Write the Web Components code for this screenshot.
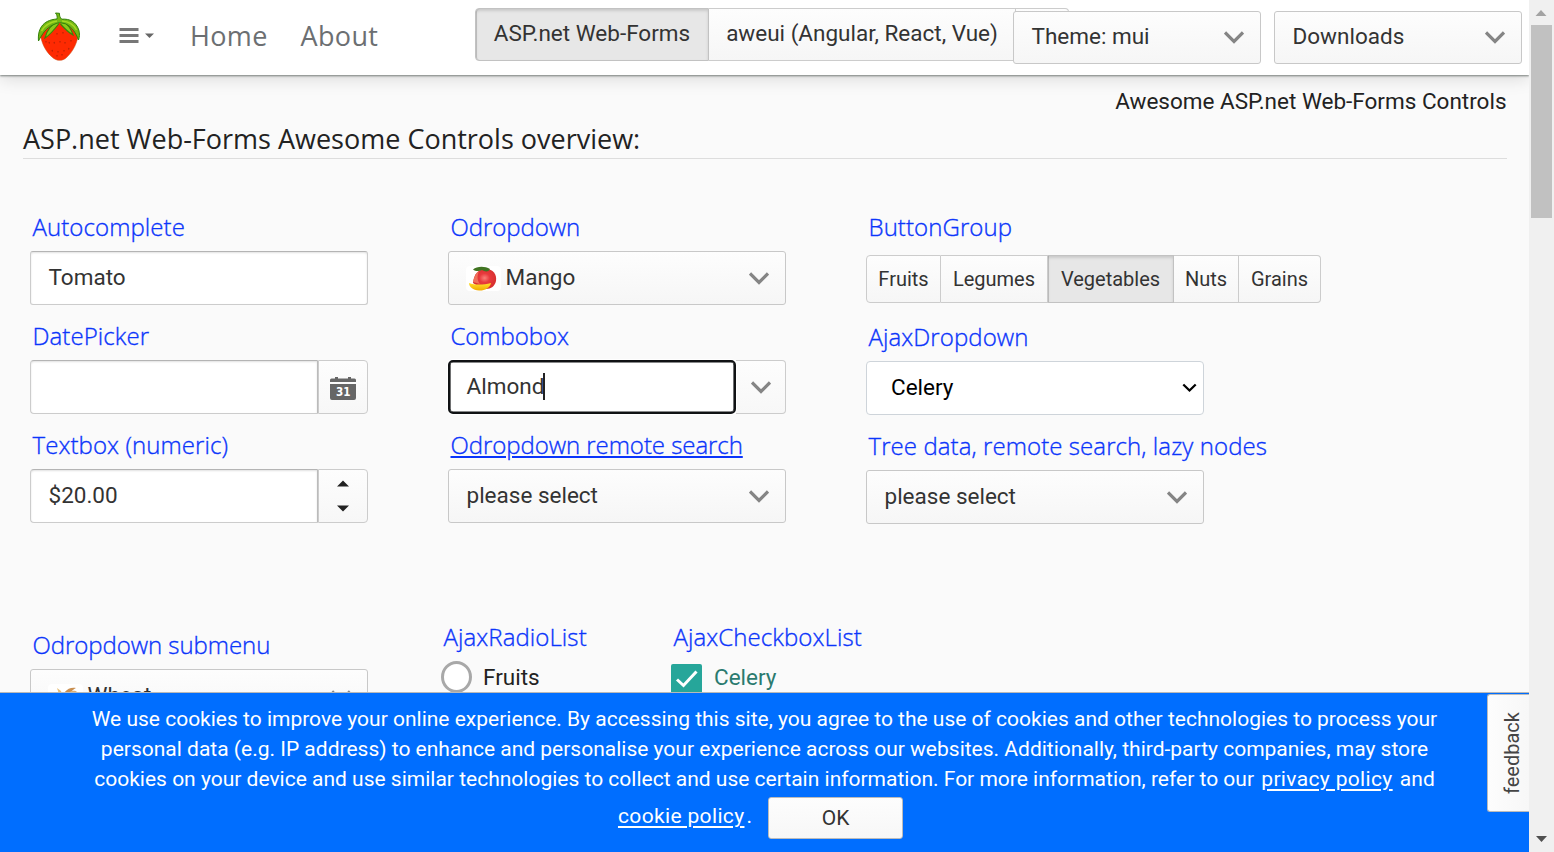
<!DOCTYPE html>
<html lang="en">
<head>
<meta charset="utf-8">
<title>ASP.net Web-Forms Awesome Controls overview</title>
<style>
html,body{margin:0;height:100%;overflow:hidden;background:#fafafa}
body{font-family:Roboto,"Liberation Sans",sans-serif;font-size:22.5px;color:#222}
</style>
</head>
<body>
<awe-page></awe-page>
<script>
const define = (name, html) => customElements.define(name, class extends HTMLElement {
  constructor() {
    super();
    const t = document.createElement('template');
    t.innerHTML = html;
    this.attachShadow({ mode: 'open' }).append(t.content.cloneNode(true));
  }
});

define('awe-chevron', `
<style>:host{display:block;width:20px;height:13px;flex:none}svg{display:block}</style>
<svg width="20" height="13" viewBox="0 0 20 13"><path d="M1 1.5 L10 10.4 L19 1.5" fill="none" stroke="#858585" stroke-width="3.2"/></svg>`);

define('awe-strawberry', `
<style>:host{display:block;width:44px;height:50px}svg{display:block}</style>
<svg width="44" height="50" viewBox="0 0 44 50">
<path d="M3 20 C4 31 9 40 15 45 C19 49 25 49.500 29 46 C36 40 41 30 41.500 20 C35 8 10 8 3 20Z" fill="#fe2a02" stroke="#c8480f" stroke-width=".5"/>
<path d="M21 9 C15 12 10 18 8 26 C13 23 17 18 22 11.500 M25 9 C31 12 34 16 36 23 C31 20 27 16 23.500 12" fill="#8cc91a" stroke="#3c8508" stroke-width="1.200"/>
<path d="M18.500 1 L22.500 1.300 C22.300 4 23 5 24.600 7.200 C33 6.500 39 10 41.800 18 C42.800 22 42.600 25 41.500 28 C39 21 35 15 28.500 11.800 L22.500 10.500 C13 13 8 18 5 23 C3.500 25 2.500 27 1.500 29 C.5 18 5 8 20 7 C20.500 4.500 20 3 18.500 1Z" fill="#75b714" stroke="#32820a" stroke-width="1"/>
<path d="M20 9 C13 10 8 13 4.500 19 M25 9 C32 9.500 37 13 39.500 18" fill="none" stroke="#a5d922" stroke-width="1.600"/>
<path d="M26 20v1.500 M20 21v1.500 M12 30l.5 1.500 M17 30l.5 1.500 M23 29v1.500 M28 30v1.500 M34 28v1.500 M9 29v1.500 M15 38l.5 1.500 M21 39v1.500 M27 38v1.500 M32 36l-.5 1.500 M20 43v1.500 M25 42v1.500" stroke="#b32106" stroke-width="1.100"/>
</svg>`);

define('awe-menu-icon', `
<style>:host{display:block;width:36px;height:17px}svg{display:block}</style>
<svg width="36" height="17" viewBox="0 0 36 17"><path d="M.5 2.500h19M.5 8.500h19M.5 14.500h19" stroke="#777" stroke-width="2.900"/><path d="M26 6.500h9L30.500 11z" fill="#666"/></svg>`);

define('awe-calendar', `
<style>:host{display:block;width:26px;height:24px;margin-top:3px}svg{display:block}text{font:bold 13px "DejaVu Sans",sans-serif}</style>
<svg width="26" height="24" viewBox="0 0 26 24"><path d="M0 5V3q0-1.500 1.500-1.500H5V0h3v1.500h10V0h3v1.500h3.500q1.500 0 1.500 1.500v2zM0 7h26v14q0 2-2 2H2q-2 0-2-2z" fill="#666"/><text x="6" y="19.300" fill="#fff" textLength="14.500" lengthAdjust="spacingAndGlyphs">31</text></svg>`);

define('awe-mango', `
<style>:host{display:block;width:35px;height:25px;border-radius:4px;background:#fff}svg{display:block}</style>
<svg width="35" height="25" viewBox="0 0 35 25"><defs><radialGradient id="m" cx=".5" cy=".45"><stop offset="0" stop-color="#fb8078"/><stop offset=".45" stop-color="#e83a3e"/><stop offset="1" stop-color="#d8302f"/></radialGradient><linearGradient id="y" x2="0" y2="1"><stop stop-color="#ffe22c"/><stop offset="1" stop-color="#f2a900"/></linearGradient></defs>
<path d="M7 17C8 8 12 3 20 3C27 3 31 8 30 15C29 20 25 23 20 23C15 22 11 20 7 17Z" fill="url(#m)"/><path d="M7 16C8 11 10 7 13 5C11 10 11 14 14 18Z" fill="#f0705a"/>
<path d="M3 17C9 19 17 19 25 17C24 22 18 25 13 24.500C7 24 3 21 3 17Z" fill="url(#y)"/>
<path d="M7 3.500C11 0 19 0 24 3C23 6 19 6 16 4C13 6 9 5 7 3.500Z" fill="#407421"/></svg>`);

define('awe-wheat', `
<style>:host{display:block;width:35px;height:25px;border-radius:4px;background:#fff}svg{display:block}</style>
<svg width="35" height="25" viewBox="0 0 35 25"><path d="M9 4l4 3 2 6-4-3zM7 10l5 2 3 5-5-1z" fill="#e5bd76"/><path d="M16 9C19 5 23 3 28 4C24 6 22 9 17 15Z" fill="#c98f50"/><path d="M22 8C25 6 28 7 29 8C25 9 22 13 17 18Z" fill="#dcae73"/></svg>`);

define('awe-brand-link', `
<style>:host{display:block;font:27px/37px "Open Sans",sans-serif;color:#6c6f72;letter-spacing:.35px;white-space:nowrap}</style><slot></slot>`);

define('awe-label', `
<style>:host{display:block;height:40px;padding-left:2.500px;font:300 24px/32px "Open Sans",sans-serif;color:#0b35fb;-webkit-text-stroke:.35px #0b35fb;letter-spacing:var(--ls,.08px);white-space:nowrap;box-sizing:border-box}
:host([under]) span{text-decoration:underline;text-decoration-thickness:2px;text-underline-offset:2px}</style><span><slot></slot></span>`);

define('awe-dropdown', `
<style>:host{display:flex;box-sizing:border-box;width:var(--w,338px);height:54px;align-items:center;border:1px solid #c8c8c8;border-radius:3px;background:linear-gradient(#fdfdfd,#f6f6f6);padding:0 16px 0 17.500px;color:#333;line-height:30px;white-space:nowrap}
:host([compact]){height:53px}
:host([compact]) .t{margin-top:-4px}
.t{flex:1;display:flex;align-items:center;margin-top:-2px}
::slotted(awe-mango),::slotted(awe-wheat){margin:3px 5px 0 -1px}</style>
<div class="t"><slot name="icon"></slot><slot></slot></div><awe-chevron></awe-chevron>`);

define('awe-textbox', `
<style>:host{display:flex;width:338px;height:54px}
.in{flex:1;box-sizing:border-box;border:1px solid #ccc;border-top-color:#b4b4b4;border-radius:3px;background:#fff;box-shadow:inset 0 1px 2px rgba(0,0,0,.12);padding-left:17.500px;line-height:50px;color:#333}
.btn{display:none;box-sizing:border-box;width:50px;border:1px solid #ccc;border-left-width:1px;border-radius:0 4px 4px 0;background:linear-gradient(#fdfdfd,#f7f7f7);align-items:center;justify-content:center}
:host([addon]) .btn{display:flex}
:host([addon]) .in{border-radius:4px 0 0 4px;border-right-color:#bbb}
:host([focused]) .in{border:2px solid #101214;border-radius:5px;box-shadow:0 0 0 1px #fff,inset 0 0 0 .6px #101214;padding-left:16.500px;line-height:48px;z-index:1}
:host([focused]) .btn{border-left:0}</style>
<div class="in"><slot></slot></div><div class="btn"><slot name="addon"></slot></div>`);

define('awe-caret', `<style>:host{display:inline-block;width:2px;height:27px;background:#222;vertical-align:-6px;margin-left:-1px}</style>`);

define('awe-spinner', `<style>:host{display:block}svg{display:block}</style>
<svg width="12" height="32" viewBox="0 0 12 32"><path d="M0 6.500L6 .5L12 6.500zM0 25.500h12L6 31.500z" fill="#222"/></svg>`);

define('awe-native-select', `
<style>:host{display:flex;align-items:center;box-sizing:border-box;width:338px;height:54px;border:1px solid #ced4da;border-radius:4px;background:#fff;color:#000;padding:0 6px 0 24px}
span{flex:1;margin-top:-2px}svg{display:block}</style>
<span><slot></slot></span><svg width="15" height="10" viewBox="0 0 15 10"><path d="M1.300 1.500L7.500 7.500L13.700 1.500" fill="none" stroke="#000" stroke-width="2.300"/></svg>`);

define('awe-group-button', `
<style>:host{display:block;flex:none;box-sizing:border-box;width:var(--w);height:48px;border:1px solid #ccc;border-left-width:0;background:linear-gradient(#fdfdfd,#f6f6f6);font-size:20px;line-height:46px;color:#333;text-align:center;white-space:nowrap}
:host([first]){border-left-width:1px;border-radius:4px 0 0 4px}:host([last]){border-radius:0 4px 4px 0}
:host([big]){height:53px;font-size:22.5px;line-height:49px}
:host([active]){background:#e7e7e7;border-color:#c2c2c2;box-shadow:inset 0 2px 3px rgba(0,0,0,.13),inset 1px 0 0 #c4c4c4}</style><slot></slot>`);

define('awe-group', `<style>:host{display:flex}</style><slot></slot>`);

define('awe-header', `
<style>:host{display:flex;position:relative;z-index:2;height:75px;box-sizing:border-box;background:#fff;box-shadow:0 1px 2px rgba(80,90,85,.75),0 4px 16px rgba(0,0,0,.13);clip-path:inset(0 0 -30px 0)}
.left{display:flex;width:475px;box-sizing:border-box;padding-left:36.500px}
awe-strawberry{margin-top:11.500px}awe-menu-icon{margin:27px 0 0 38.500px}
.home{margin:17px 0 0 35px;width:110.500px}.about{margin-top:17px}
.switch{width:538px;padding-top:8px}
.right{display:flex;gap:13px;padding-top:11px}
awe-dropdown{--w:248px}</style>
<div class="left"><awe-strawberry></awe-strawberry><awe-menu-icon></awe-menu-icon><awe-brand-link class="home">Home</awe-brand-link><awe-brand-link class="about">About</awe-brand-link></div>
<awe-group class="switch"><awe-group-button big first active style="--w:234px">ASP.net Web-Forms</awe-group-button><awe-group-button big style="--w:307px">aweui (Angular, React, Vue)</awe-group-button><awe-group-button big last style="--w:53px"></awe-group-button></awe-group>
<div class="right"><awe-dropdown compact>Theme: mui</awe-dropdown><awe-dropdown compact>Downloads</awe-dropdown></div>`);

define('awe-radio', `
<style>:host{display:flex;align-items:center;gap:11px;color:#222}i{box-sizing:border-box;width:31px;height:32px;border:3px solid #a8a8a8;border-radius:50%;background:#fff}</style><i></i><span><slot></slot></span>`);

define('awe-checkbox', `
<style>:host{display:flex;align-items:center;gap:12px;color:#2b7a6f;height:32px}svg{display:block;margin-top:4px}</style>
<svg width="31" height="31" viewBox="0 0 31 31"><rect width="31" height="31" rx="2" fill="#26a69a"/><path d="M6 15.500L12.500 21.500L25.500 7.500" fill="none" stroke="#fff" stroke-width="3"/></svg><span><slot></slot></span>`);

define('awe-overview', `
<style>:host{display:block;height:617px;overflow:hidden;padding-left:30px}
.crumb{height:53px;box-sizing:border-box;padding:11px 22.500px 0 0;text-align:right;line-height:30px}
.crumb,.title{margin-left:-7px}
.title{margin-right:22px;height:31px;border-bottom:1px solid #ddd;font:27px/37px "Open Sans",sans-serif;margin-top:-1px;display:flex;align-items:flex-end;white-space:nowrap}
.title span{line-height:38px}
.cols{display:grid;grid-template-columns:338px 338px 455px;column-gap:80px;margin-top:52px}
.col{display:flex;flex-direction:column;gap:15px}
.third{gap:0}.third div+div{margin-top:18px}.third div+div+div{margin-top:15px}
.third div:first-child awe-label{height:44px}
.lower{display:flex;margin-top:97px}
.lower .sub{width:411px;padding-top:8px}.lower .radio{width:230px}
.tight{--ls:-.06px}</style>
<div class="crumb">Awesome ASP.net Web-Forms Controls</div>
<div class="title"><span>ASP.net Web-Forms Awesome Controls overview:</span></div>
<div class="cols">
<div class="col">
<div><awe-label>Autocomplete</awe-label><awe-textbox>Tomato</awe-textbox></div>
<div><awe-label>DatePicker</awe-label><awe-textbox addon><awe-calendar slot="addon"></awe-calendar></awe-textbox></div>
<div><awe-label>Textbox (numeric)</awe-label><awe-textbox addon>$20.00<awe-spinner slot="addon"></awe-spinner></awe-textbox></div>
</div>
<div class="col">
<div><awe-label class="tight">Odropdown</awe-label><awe-dropdown><awe-mango slot="icon"></awe-mango>Mango</awe-dropdown></div>
<div><awe-label class="tight">Combobox</awe-label><awe-textbox addon focused>Almond<awe-caret></awe-caret><awe-chevron slot="addon"></awe-chevron></awe-textbox></div>
<div><awe-label class="tight" under>Odropdown remote search</awe-label><awe-dropdown>please select</awe-dropdown></div>
</div>
<div class="col third">
<div><awe-label>ButtonGroup</awe-label><awe-group><awe-group-button first style="--w:75px">Fruits</awe-group-button><awe-group-button style="--w:107px">Legumes</awe-group-button><awe-group-button active style="--w:126px">Vegetables</awe-group-button><awe-group-button style="--w:65px">Nuts</awe-group-button><awe-group-button last style="--w:82px">Grains</awe-group-button></awe-group></div>
<div><awe-label>AjaxDropdown</awe-label><awe-native-select>Celery</awe-native-select></div>
<div><awe-label>Tree data, remote search, lazy nodes</awe-label><awe-dropdown>please select</awe-dropdown></div>
</div>
</div>
<div class="lower">
<div class="sub"><awe-label class="tight">Odropdown submenu</awe-label><awe-dropdown><awe-wheat slot="icon"></awe-wheat>Wheat</awe-dropdown></div>
<div class="radio"><awe-label>AjaxRadioList</awe-label><awe-radio>Fruits</awe-radio></div>
<div><awe-label>AjaxCheckboxList</awe-label><awe-checkbox>Celery</awe-checkbox></div>
</div>`);

define('awe-cookie-bar', `
<style>:host{display:block;position:relative;height:160px;box-sizing:border-box;background:#006eff;border-top:1px solid #b9b9b9;color:#fff;font-size:21px;line-height:30px;padding-top:11px;text-align:center}
p{margin:0;white-space:nowrap}.last{display:flex;justify-content:center;align-items:center;margin-top:3px;height:42px;padding-right:10px}
u{text-decoration-thickness:2px;text-underline-offset:3px;margin:0 2px;letter-spacing:.35px}
button{box-sizing:border-box;width:135px;height:42px;margin:0 0 0 16px;border:1px solid #bbb;border-radius:3px;background:linear-gradient(#fdfdfd,#f7f7f7);font:21px Roboto,sans-serif;color:#333;padding:0}
.fb{position:absolute;right:0;top:1px;box-sizing:border-box;width:42px;height:118px;background:linear-gradient(90deg,#f7f7f7,#fdfdfd);color:#444;font-size:20px;line-height:38px;writing-mode:vertical-rl;transform:rotate(180deg);border:1px solid #bbb;border-left:0;border-radius:0 3px 3px 0;padding-right:5px}</style>
<p>We use cookies to improve your online experience. By accessing this site, you agree to the use of cookies and other technologies to process your</p>
<p>personal data (e.g. IP address) to enhance and personalise your experience across our websites. Additionally, third-party companies, may store</p>
<p>cookies on your device and use similar technologies to collect and use certain information. For more information, refer to our <u>privacy policy</u> and</p>
<div class="last"><span style="margin-top:-4px"><u>cookie policy</u>.</span><button>OK</button></div>
<div class="fb">feedback</div>`);

define('awe-scrollbar', `
<style>:host{display:flex;flex-direction:column;align-items:center;width:25px;height:852px;background:#f0f0f0}
svg{display:block;height:25px}.thumb{width:21px;height:193px;background:#c1c1c1;margin-bottom:auto}</style>
<svg width="25" height="25"><path d="M6.500 16h11L12 10z" fill="#a3a3a3"/></svg><div class="thumb"></div><svg width="25" height="25"><path d="M7 9h11L12.500 15z" fill="#505050"/></svg>`);

define('awe-page', `
<style>:host{display:grid;grid-template-columns:1529px 25px;height:852px;overflow:hidden}main{min-width:0}</style>
<main><awe-header></awe-header><awe-overview></awe-overview><awe-cookie-bar></awe-cookie-bar></main><awe-scrollbar></awe-scrollbar>`);
</script>
</body>
</html>
